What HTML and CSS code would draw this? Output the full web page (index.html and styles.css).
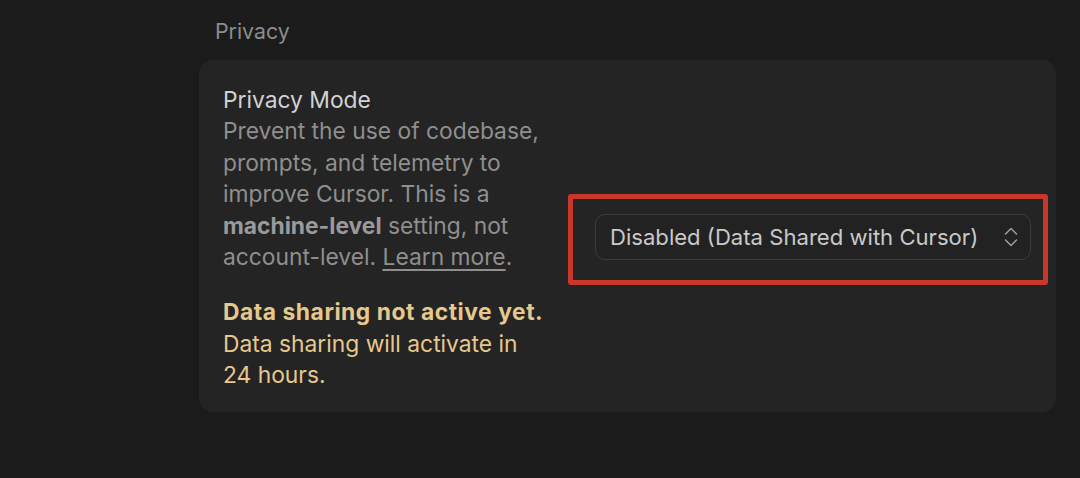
FILE: index.html
```html
<!DOCTYPE html>
<html lang="en">
<head>
    <meta charset="UTF-8">
    <meta name="viewport" content="width=device-width, initial-scale=1.0">
    <title>Privacy Settings</title>
    <link rel="stylesheet" href="styles.css">
</head>
<body>
    <section class="settings-section">
        <h3 class="section-title">Privacy</h3>

        <div class="settings-card">
            <div class="setting-info">
                <div class="setting-name">Privacy Mode</div>
                <p class="setting-desc">
                    Prevent the use of codebase, prompts, and telemetry to improve Cursor. This is a
                    <b>machine-level</b> setting, not account-level. <a href="#">Learn more</a>.
                </p>
                <p class="setting-warning">
                    <b>Data sharing not active yet.</b><br>
                    Data sharing will activate in 24 hours.
                </p>
            </div>

            <div class="select-wrap">
                <div class="select-box">
                    <span>Disabled (Data Shared with Cursor)</span>
                    <svg width="14" height="24" viewBox="0 0 14 24" fill="none" stroke="currentColor" stroke-width="1.6" stroke-linecap="round" stroke-linejoin="round">
                        <path d="M1.5 9 L7 3.5 L12.5 9"/>
                        <path d="M1.5 15 L7 20.5 L12.5 15"/>
                    </svg>
                </div>
            </div>
        </div>
    </section>
</body>
</html>
```

FILE: styles.css
```css
body {
    margin: 0;
    padding: 0;
    background-color: #1b1b1b;
    font-family: "Inter", "Liberation Sans", sans-serif;
    overflow: hidden;
}

.settings-section {
    margin-left: 199px;
    width: 857px;
    padding-top: 17px;
}

.section-title {
    margin: 0 0 15px 16px;
    font-size: 21.3px;
    font-weight: 400;
    line-height: 28px;
    color: #8c8c8c;
}

/* card */
.settings-card {
    display: flex;
    justify-content: space-between;
    align-items: center;
    background-color: #242424;
    border-radius: 14px;
    padding: 24px 25px 21px 24px;
}

.setting-info {
    width: 324px;
    font-size: 22.8px;
    line-height: 31.4px;
}

.setting-name {
    color: #d2d2d2;
}

.setting-desc {
    margin: 0;
    color: #8f8f8f;
}

.setting-desc b {
    font-weight: 700;
    color: #9a9a9a;
}

.setting-desc a {
    color: #8f8f8f;
    text-decoration: underline;
    text-underline-offset: 4px;
}

.setting-warning {
    margin: 24px 0 0 0;
    color: #e6c88c;
}

.setting-warning b {
    letter-spacing: 0.55px;
}

/* select */
.select-wrap {
    position: relative;
}

.select-wrap::after {
    content: '';
    position: absolute;
    top: -20px;
    left: -27px;
    right: -17px;
    bottom: -25px;
    border: 5px solid #c9372a;
    border-radius: 3px;
}

.select-box {
    display: flex;
    align-items: center;
    justify-content: space-between;
    width: 436px;
    height: 46px;
    box-sizing: border-box;
    padding: 0 12px 0 14px;
    border: 1px solid #3a3d40;
    border-radius: 10px;
    background-color: #222222;
    font-size: 22.1px;
    color: #c9c9c9;
}

.select-box svg {
    color: #9a9a9a;
}
```
